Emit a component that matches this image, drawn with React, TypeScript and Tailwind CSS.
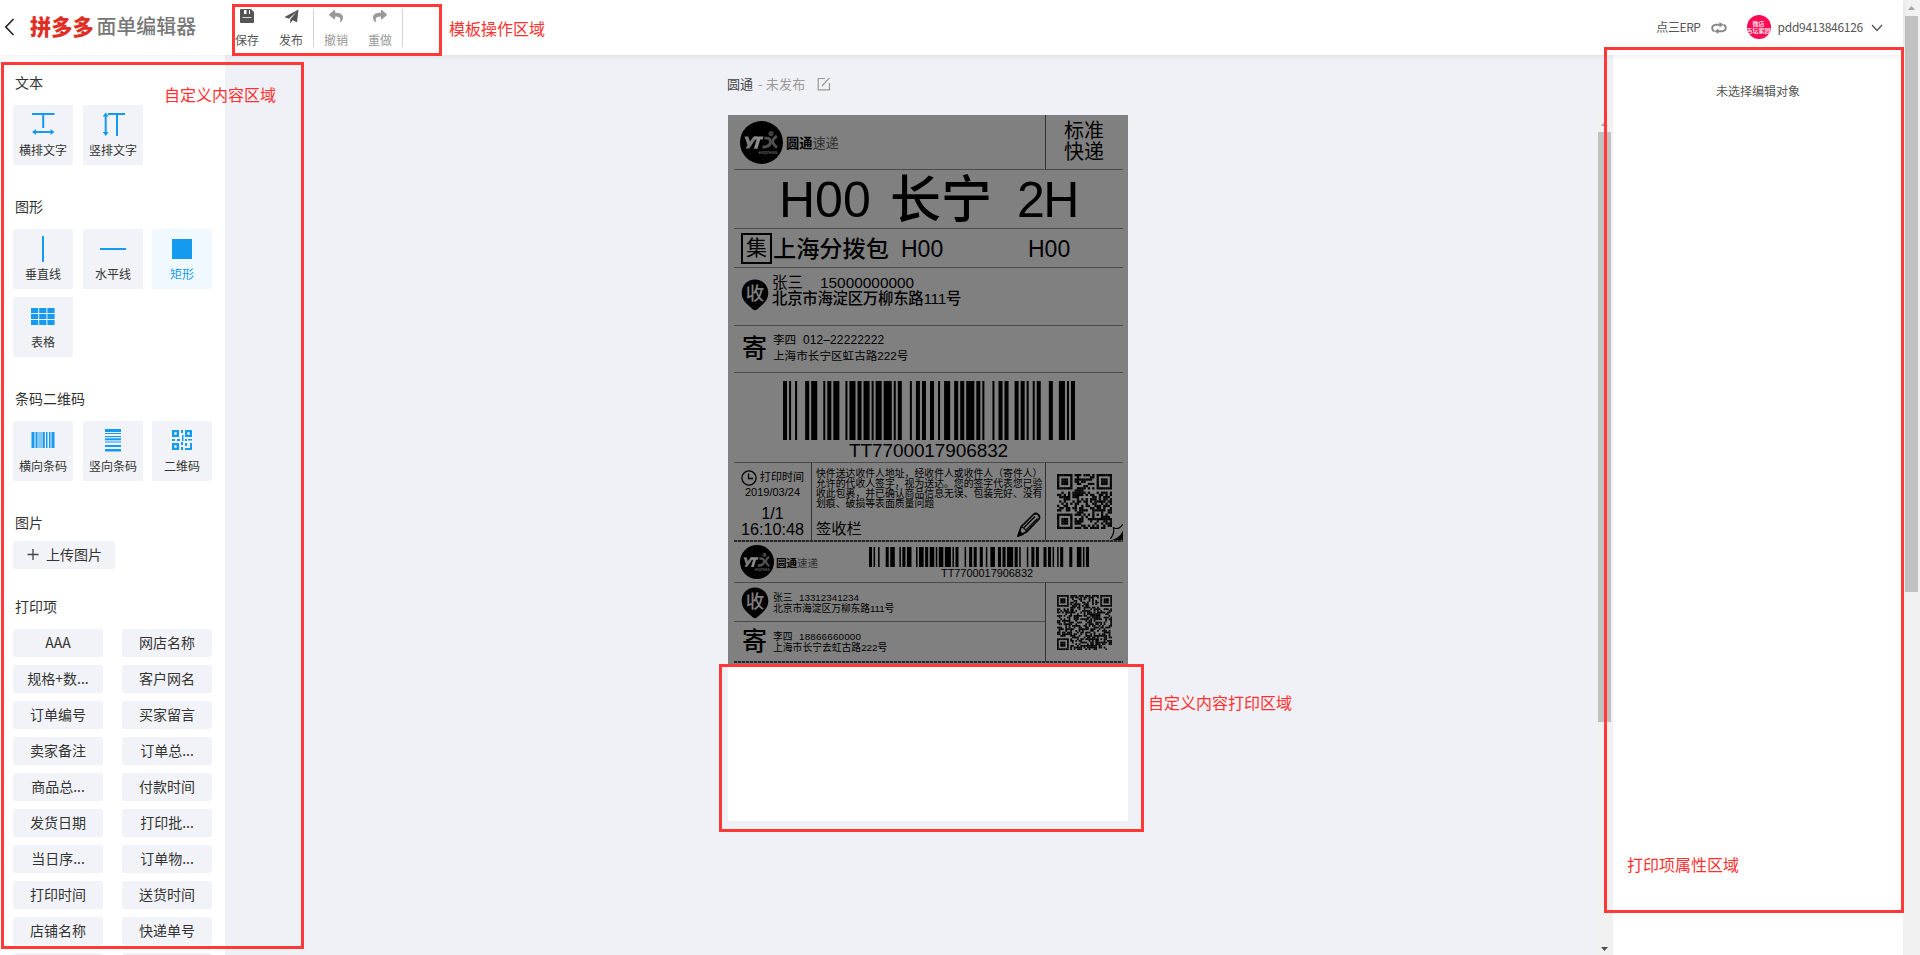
import React from "react";
import { FaReply, FaShare } from "react-icons/fa";

const BLUE = "#149bf0";

const printItems = [
  "AAA", "网店名称", "规格+数...", "客户网名", "订单编号", "买家留言", "卖家备注", "订单总...", "商品总...", "付款时间",
  "发货日期", "打印批...", "当日序...", "订单物...", "打印时间", "送货时间", "店铺名称", "快递单号", "", "",
];

// Code 128 bars as [start module, width in modules]
const bars: [number, number][] = [
  [0, 2], [3, 1], [6, 1], [11, 2], [14, 3], [20, 1], [22, 2], [25, 3], [31, 1], [33, 3], [37, 2], [40, 3], [44, 1],
  [46, 3], [50, 4], [55, 1], [57, 2], [63, 1], [66, 2], [69, 2], [73, 2], [77, 1], [80, 3], [85, 2], [88, 2], [91, 4],
  [96, 2], [99, 1], [104, 1], [107, 2], [110, 2], [115, 2], [118, 2], [121, 1], [124, 1], [126, 2], [132, 2], [137, 3],
  [141, 1], [143, 2],
];

function Barcode({ width, height }: { width: number; height: number }) {
  return (
    <svg width={width} height={height} viewBox="0 0 145 10" preserveAspectRatio="none" className="block">
      {bars.map(([x, w]) => (
        <rect key={x} x={x} y={0} width={w} height={10} />
      ))}
    </svg>
  );
}

function QrCode({ n, seed }: { n: number; seed: number }) {
  let s = seed;
  const next = () => {
    s = (s * 1103515245 + 12345) % 2147483648;
    return s / 2147483648;
  };
  const ring = (dx: number, dy: number) => Math.max(Math.abs(dx), Math.abs(dy));
  const cells: React.ReactNode[] = [];
  for (let y = 0; y < n; y++) {
    for (let x = 0; x < n; x++) {
      let on = next() > 0.46;
      for (const [cx, cy] of [[3, 3], [n - 4, 3], [3, n - 4]]) {
        const r = ring(x - cx, y - cy);
        if (r <= 4) on = r <= 1 || r === 3;
      }
      const a = ring(x - (n - 7), y - (n - 7));
      if (a <= 2) on = a !== 1;
      if (on) cells.push(<rect key={`${x}-${y}`} x={x} y={y} width={1.04} height={1.04} />);
    }
  }
  return (
    <svg width={55} height={55} viewBox={`0 0 ${n} ${n}`} className="block">
      {cells}
    </svg>
  );
}

function YtoLogo({ size }: { size: number }) {
  return (
    <svg width={size} height={size} viewBox="0 0 43 43" className="block shrink-0">
      <circle cx="21.5" cy="21.5" r="21.5" />
      <path d="M4.500 15.500h3.800l1.700 5 3.500-5h3.800l-8 12H5.500l2-3.300z" fill="#7c7c7c" />
      <path d="M14.500 15.500h9l-1 3h-2.300l-2.700 9.300h-3.600l2.700-9.300h-2.800z" fill="#8c8c8c" />
      <path d="M24.500 17.300q6-1 6 3.700t-8 5.200" fill="none" stroke="#505050" strokeWidth="3" />
      <path d="M36.800 15q-4 2.800-4 5.600t4.200 6" fill="none" stroke="#505050" strokeWidth="2.800" />
      <circle cx="31" cy="12.500" r="2.600" fill="#404040" />
      <text x="18.500" y="32.500" fontSize="5.600" fill="#707070" textLength="19" fontFamily="Liberation Sans, sans-serif">express</text>
    </svg>
  );
}

function Pin() {
  return (
    <svg width="28" height="32" viewBox="0 0 28 32" className="block shrink-0">
      <path d="M14 .5C6.500.5.7 6.300.7 13.800c0 5 2.500 9 6 12L12 30.500q2 1.500 4 0l5.300-4.700c3.500-3 6-7 6-12C27.300 6.300 21.500.5 14 .5z" />
      <text x="14" y="21" fontSize="18.500" fontWeight="500" textAnchor="middle" fill="#808080" fontFamily="Noto Sans CJK SC, sans-serif">收</text>
    </svg>
  );
}

function Brand({ small }: { small?: boolean }) {
  return (
    <span className={small ? "text-[10.5px] leading-4 ml-[2px] mt-[2px]" : "text-[13.2px] leading-5 ml-[3px] mt-[3px]"}>
      <span className="font-bold">圆通</span>
      <span className="text-[#303030]">速递</span>
    </span>
  );
}

function CutLine() {
  return <div className="ml-[6px] w-[389px] h-[2px] shrink-0 bg-[repeating-linear-gradient(90deg,#2a2a2a_0_3px,#606060_3px_4px)]" />;
}

function Waybill() {
  const line = "ml-[6px] w-[389px] border-b border-[#4a4a4a] shrink-0";
  return (
    <div className="w-[400px] h-[551px] bg-[#808080] text-black flex flex-col font-['Liberation_Sans','Noto_Sans_CJK_SC',sans-serif] whitespace-nowrap">
      <div className={`${line} h-[55px] flex`}>
        <div className="w-[312px] border-r border-[#333] flex items-center pl-[6px]">
          <YtoLogo size={43} />
          <Brand />
        </div>
        <div className="pl-[18px] pt-[6px] text-[20px] leading-[20.7px]">
          <div>标准</div>
          <div>快递</div>
        </div>
      </div>
      <div className={`${line} h-[59px] flex items-center text-[50px] leading-[56px]`}>
        <span className="w-[112px] pl-[45px] box-content -mr-px pt-[2px]">H00</span>
        <span className="w-[127px] font-medium text-[51px] pt-[3px]">长宁</span>
        <span className="pt-[2px] tracking-[-1.5px]">2H</span>
      </div>
      <div className={`${line} h-[39px] flex items-center`}>
        <span className="ml-[7px] size-[31px] border-2 border-black text-[21px] leading-[26px] text-center">集</span>
        <span className="ml-[1px] w-[128px] text-[23.2px] leading-[30px] font-medium pt-px">上海分拨包</span>
        <span className="w-[127px] text-[23px] leading-[30px] pt-[2px]">H00</span>
        <span className="text-[23px] leading-[30px] pt-[2px]">H00</span>
      </div>
      <div className={`${line} h-[58px] flex`}>
        <div className="pl-[7px] pt-[11px]"><Pin /></div>
        <div className="ml-[3px] pt-[7px] text-[15.4px] leading-[16px]">
          <div className="flex"><span className="w-[48px]">张三</span><span>15000000000</span></div>
          <div className="font-medium tracking-[-0.25px]">北京市海淀区万柳东路111号</div>
        </div>
      </div>
      <div className={`${line} h-[47px] flex`}>
        <div className="w-[39px] pl-[8px] pt-[6px] text-[25px] leading-[32px] font-medium">寄</div>
        <div className="pt-[6px] text-[11.6px] leading-[16px]">
          <div className="flex"><span className="w-[30px]">李四</span><span className="text-[12px] tracking-[0.1px]">012–22222222</span></div>
          <div>上海市长宁区虹古路222号</div>
        </div>
      </div>
      <div className={`${line} h-[90px] flex flex-col pt-[8px]`}>
        <div className="ml-[49px]"><Barcode width={292} height={59} /></div>
        <div className="ml-[115px] text-[19px] leading-[22px] tracking-[-0.1px]">TT7700017906832</div>
      </div>
      <div className="ml-[6px] w-[389px] h-[77px] flex shrink-0">
        <div className="w-[78px] border-r border-[#333] flex flex-col items-center pt-[6px]">
          <div className="flex items-center gap-[3px] text-[11.1px] leading-[17px]">
            <svg width="16" height="16" viewBox="0 0 16 16" fill="none" stroke="#000" strokeWidth="1.300">
              <circle cx="8" cy="8" r="7.100" />
              <path d="M7.500 3.500V8.500H12" />
            </svg>
            打印时间
          </div>
          <div className="text-[11px] leading-[13px]">2019/03/24</div>
          <div className="text-[16.2px] leading-[17px] mt-[6px]">1/1</div>
          <div className="text-[16.2px] leading-[16px] -mt-px">16:10:48</div>
        </div>
        <div className="w-[234px] border-r border-[#333] pl-[4px] pt-[5px]">
          <div className="text-[9.85px] leading-[10px] font-['Noto_Sans_CJK_SC',sans-serif]">
            <div>快件送达收件人地址，经收件人或收件人（寄件人）</div>
            <div>允许的代收人签字，视为送达。您的签字代表您已验</div>
            <div>收此包裹，并已确认商品信息无误、包装完好、没有</div>
            <div>划痕、破损等表面质量问题</div>
          </div>
          <div className="flex justify-between pr-[4px]">
            <span className="pt-[10px] text-[15.3px] leading-[22px]">签收栏</span>
            <svg width="24" height="25" viewBox="0 0 24 25" className="mt-[4px]" fill="none" stroke="#000" strokeWidth="1.700">
              <path d="M1.500 23.500L4 15 16.500 2.500q2-2 4.500 0t1 4.500L9.500 20z" />
              <path d="M4 15q4 .5 5.500 5M7 15.500L18 4.500M9 18L20.500 6.500" strokeWidth="1.200" />
              <path d="M1 24l1.500-4.500 3 3z" fill="#000" />
            </svg>
          </div>
        </div>
        <div className="relative flex-1 pl-[11px] pt-[11px]">
          <QrCode n={25} seed={77} />
          <svg width="15" height="16" viewBox="0 0 14 15" className="absolute right-0 bottom-0">
            <path d="M0 15Q7 9 5 3.500Q10 6 14 0V15z" fill="#808080" />
            <path d="M2 14Q6.500 9 5 3.500Q10 6 14 0" fill="none" stroke="#000" />
            <path d="M4 15Q12 12 14 6V15z" />
          </svg>
        </div>
      </div>
      <CutLine />
      <div className={`${line} h-[41px] flex`}>
        <div className="flex items-center pl-[6px] w-[135px]"><YtoLogo size={34} /><Brand small /></div>
        <div className="pt-[5px]">
          <Barcode width={220} height={20} />
          <div className="ml-[72px] text-[10.9px] leading-[14px] -mt-px">TT7700017906832</div>
        </div>
      </div>
      <div className="ml-[6px] w-[389px] h-[78px] flex shrink-0">
        <div className="w-[312px] border-r border-[#333]">
          <div className="h-[39px] border-b border-[#4a4a4a] flex">
            <div className="pl-[7px] pt-[4px]"><Pin /></div>
            <div className="ml-[4px] pt-[9px] text-[9.8px] leading-[11px]">
              <div className="flex"><span className="w-[26px]">张三</span><span>13312341234</span></div>
              <div className="tracking-[-0.1px]">北京市海淀区万柳东路111号</div>
            </div>
          </div>
          <div className="flex">
            <div className="w-[39px] pl-[8px] pt-[3px] text-[25px] leading-[32px] font-medium">寄</div>
            <div className="pt-[9px] text-[9.8px] leading-[11px]">
              <div className="flex"><span className="w-[26px]">李四</span><span className="tracking-[0.2px]">18866660000</span></div>
              <div>上海市长宁去虹古路222号</div>
            </div>
          </div>
        </div>
        <div className="pl-[11px] pt-[12px]"><QrCode n={33} seed={4242} /></div>
      </div>
      <CutLine />
    </div>
  );
}

function Tile({ label, active, children }: { label: string; active?: boolean; children: React.ReactNode }) {
  return (
    <div className={`size-[60px] rounded-[2px] flex flex-col items-center ${active ? "bg-[#f0f9ff] text-[#149bf0]" : "bg-[#f2f3f8] text-[#333]"}`}>
      <svg width="28" height="28" viewBox="0 0 28 28" className="mt-[6px] block" fill={BLUE}>{children}</svg>
      <span className="text-[12px] leading-[18px] mt-[2px]">{label}</span>
    </div>
  );
}

const heading = "text-[14px] leading-[22px] pl-[2px]";

function Section({ title, children }: { title: string; children: React.ReactNode }) {
  return (
    <section className="mb-[30px]">
      <h3 className={`${heading} mb-[12px]`}>{title}</h3>
      <div className="grid grid-cols-[70px_69px_60px] gap-y-2">{children}</div>
    </section>
  );
}

function Sidebar() {
  return (
    <aside className="w-[225px] shrink-0 bg-white pl-[13px] pt-[16px] text-[#333]">
      <Section title="文本">
        <Tile label="横排文字">
          <path d="M3 2h22.500v2H15.200v13h-2V4H3zM6 20.100h17v2H6z" />
          <path d="M3 21l4-3v6zM25.500 21l-4-3v6z" />
        </Tile>
        <Tile label="竖排文字">
          <path d="M9 2h17v2h-7v21h-2V4H9zM5.700 5h2v17h-2z" />
          <path d="M6.700 1.500l3 4h-6zM6.700 25l3-4h-6z" />
        </Tile>
      </Section>
      <Section title="图形">
        <Tile label="垂直线"><rect x="13" y="1" width="2" height="26" /></Tile>
        <Tile label="水平线"><rect x="1" y="13" width="26" height="2" /></Tile>
        <Tile label="矩形" active><rect x="4" y="4" width="20" height="20" /></Tile>
        <Tile label="表格">
          {[5, 11, 17].map((y) => [2, 10.200, 18.400].map((x) => <rect key={`${x}${y}`} x={x} y={y} width="7.200" height="5" />))}
        </Tile>
      </Section>
      <Section title="条码二维码">
        <Tile label="横向条码">
          {[[2.500, 3], [6.500, 2], [9.500, 1], [11.500, 1], [13.500, 2.300], [17, 1.500], [20, 1.500], [22.500, 3]].map(([x, w]) => (
            <rect key={x} x={x} y="5" width={w} height="16" />
          ))}
        </Tile>
        <Tile label="竖向条码">
          {[[2, 3], [6, 1], [9, 1.200], [11.300, 2], [14.500, 1], [18, 2], [22, 2.500]].map(([y, h]) => (
            <rect key={y} x="6" y={y} width="16" height={h} />
          ))}
        </Tile>
        <Tile label="二维码">
          <path fillRule="evenodd" d="M4 3h7v7H4zm2.300 2.300v2.400h2.400V5.300zM17 3h7v7h-7zm2.300 2.300v2.400h2.400V5.300zM4 16h7v7H4zm2.300 2.300v2.400h2.400v-2.400z" />
          <path d="M13 3h2v3h-2zM14 8h1.500v6H14zM4 12h3v2H4zM9 12h3v2H9zM17 12h2v2h-2zM20 12h4v1.500h-4zM13 15h2v3h-2zM13 20h2v3h-2zM22 16h2v7h-7v-2h5zM17 16h2v3h-2z" />
        </Tile>
      </Section>
      <h3 className={`${heading} mb-[8px]`}>图片</h3>
      <div className="w-[102px] h-[28px] rounded-[3px] bg-[#f2f3f8] flex items-center pl-[14px] gap-[7px] text-[14px] mb-[26px] pb-[2px]">
        <svg width="12" height="12" viewBox="0 0 12 12"><path d="M.5 6.500h11M6 1v11" stroke="#444" strokeWidth="1.300" /></svg>
        上传图片
      </div>
      <h3 className={`${heading} mb-[12px]`}>打印项</h3>
      <div className="grid grid-cols-[90px_90px] gap-x-[19px] gap-y-2">
        {printItems.map((t, i) => (
          <div key={i} className="h-[28px] rounded-[3px] bg-[#f2f3f8] text-center text-[14px] leading-[27px]">{t}</div>
        ))}
      </div>
    </aside>
  );
}

function Tool({ label, muted, children }: { label: string; muted?: boolean; children: React.ReactNode }) {
  return (
    <div className={`w-[44px] flex flex-col items-center ${muted ? "text-[#999]" : "text-[#555]"}`}>
      <span className="h-[16px] flex items-center">{children}</span>
      <span className="text-[12px] leading-[18px] mt-[7px]">{label}</span>
    </div>
  );
}

function Header() {
  return (
    <header className="relative z-10 h-[55px] shrink-0 bg-white flex shadow-[0_1px_6px_rgba(0,0,0,0.08)]">
      <div className="w-[225px] flex items-center pl-[4px] pb-[3px]">
        <svg width="11" height="20" viewBox="0 0 11 20" fill="none" stroke="#222" strokeWidth="1.600" className="mt-[2px]"><path d="M9.500 2L1.800 10l7.700 8" /></svg>
        <span className="ml-[15px] text-[21.2px] leading-[30px] font-black text-[#e02e24]">拼多多</span>
        <span className="ml-[3px] text-[19.900px] leading-[30px] font-medium text-[#777]">面单编辑器</span>
      </div>
      <div className="flex pt-[8px]">
        <Tool label="保存">
          <svg width="14" height="14" viewBox="0 0 14 14" fill="currentColor">
            <path d="M1 0h10L14 3V13q0 1-1 1H1q-1 0-1-1V1q0-1 1-1z" />
            <path d="M4 1h2.500v4H4zM9 1h1v4H9zM2.500 8h9v.8h-9z" fill="#fff" />
          </svg>
        </Tool>
        <Tool label="发布">
          <svg width="15" height="15" viewBox="0 0 15 15" fill="currentColor">
            <path d="M14.500.5L13 13.200 8.500 11.300 6.200 14.500V10.300L12.500 3 4.800 9.800.5 8z" />
          </svg>
        </Tool>
        <i className="w-px h-[38px] bg-[#d4d4d4] mt-[1px]" />
        <Tool label="撤销" muted><FaReply size={14} /></Tool>
        <Tool label="重做" muted><FaShare size={14} /></Tool>
        <i className="w-px h-[38px] bg-[#d4d4d4] mt-[1px]" />
      </div>
      <div className="ml-auto mr-[20px] flex items-center text-[12px] text-[#555] pb-px">
        <span className="tracking-[-0.4px]">点三ERP</span>
        <svg width="16" height="12" viewBox="0 0 16 12" className="ml-[10px] mr-[20px] mt-px" fill="none" stroke="#888" strokeWidth="1.900">
          <path d="M3.500 9.300Q1.200 8.500 1.200 6T4.500 2.700H9.500M12.500 2.700Q14.800 3.500 14.800 6T11.500 9.300H6.500" />
          <path d="M8.500 0l4 2.700-4 2.700zM7.500 6.600l-4 2.700 4 2.700z" fill="#888" stroke="none" />
        </svg>
        <span className="size-[24px] rounded-full bg-[#ff0a54] text-white text-[6px] leading-[7px] text-center flex flex-col justify-center overflow-hidden font-medium whitespace-nowrap">
          <span>微店</span>
          <span className="self-center">百坛家园</span>
        </span>
        <span className="ml-[7px] tracking-[-0.27px]">pdd9413846126</span>
        <svg width="12" height="8" viewBox="0 0 12 8" className="ml-[8px] mt-[2px]" fill="none" stroke="#555" strokeWidth="1.300"><path d="M1 1l5 5.500L11 1" /></svg>
      </div>
    </header>
  );
}

function Scrollbar({ thumb, down }: { thumb: number; down?: boolean }) {
  return (
    <div className="w-[17px] shrink-0 bg-[#f1f1f1] flex flex-col items-center">
      <svg width="17" height="16" viewBox="0 0 17 16" className="block shrink-0"><path d="M5 10h7L8.500 6z" fill="#a3a3a3" /></svg>
      <div className="w-[13px] bg-[#c1c1c1]" style={{ height: thumb }} />
      {down && <svg width="17" height="17" viewBox="0 0 17 17" className="block mt-auto mb-[-2px]"><path d="M5 7h7L8.500 11z" fill="#505050" /></svg>}
    </div>
  );
}

function Note({ box, label }: { box: string; label: string }) {
  return <div className={`absolute z-20 text-[#ff3030] text-[16px] leading-[20px] whitespace-nowrap ${box}`}>{label}</div>;
}

export default function App() {
  return (
    <div className="relative w-[1920px] h-[955px] overflow-hidden flex bg-[#f0f1f6] font-['Noto_Sans_CJK_SC',sans-serif]">
      <div className="flex-1 flex flex-col min-w-0 h-full">
        <Header />
        <div className="flex flex-1 min-h-0">
          <Sidebar />
          <main className="flex-1 flex flex-col pl-[502px]">
            <div className="h-[60px] flex items-center text-[13px] text-[#999] pb-[2px]">
              <span className="text-[#444]">圆通</span>
              <span className="ml-[5px] tracking-[0.2px]">- 未发布</span>
              <svg width="14" height="14" viewBox="0 0 14 14" className="ml-[12px]" fill="none" stroke="#999" strokeWidth="1.200">
                <path d="M8 1.500H1.200V12.800H12.500V6M5 9L12.500.8" />
              </svg>
            </div>
            <div className="ml-px w-[400px] bg-white h-[706px]"><Waybill /></div>
          </main>
          <div className="flex pt-[61px]"><Scrollbar thumb={590} down /></div>
          <aside className="w-[290px] shrink-0 bg-white text-[12px] leading-[18px] text-[#555] text-center pt-[27px]">未选择编辑对象</aside>
        </div>
      </div>
      <Scrollbar thumb={576} />

      <div className="absolute z-20 left-[232px] top-[4px] w-[210px] h-[52px] border-3 border-[#ff3838]" />
      <div className="absolute z-20 left-[1px] top-[62px] w-[303px] h-[887px] border-3 border-[#ff3838]" />
      <div className="absolute z-20 left-[719px] top-[664px] w-[425px] h-[168px] border-3 border-[#ff3838]" />
      <div className="absolute z-20 left-[1604px] top-[47px] w-[300px] h-[866px] border-3 border-[#ff3838]" />
      <Note box="left-[449px] top-[18px]" label="模板操作区域" />
      <Note box="left-[164px] top-[84px]" label="自定义内容区域" />
      <Note box="left-[1148px] top-[692px]" label="自定义内容打印区域" />
      <Note box="left-[1627px] top-[854px]" label="打印项属性区域" />
    </div>
  );
}
